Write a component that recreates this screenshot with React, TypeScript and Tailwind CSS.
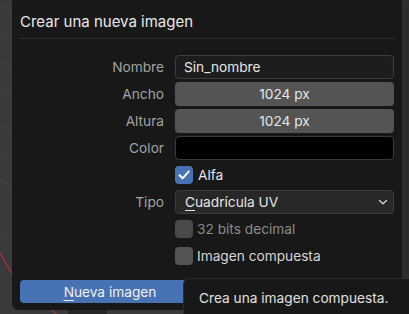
import React from "react";

function Check({ checked, dim }: { checked?: boolean; dim?: boolean }) {
  return (
    <div
      className={
        "w-[18px] h-[18px] rounded-[4px] flex items-center justify-center shrink-0 " +
        (checked ? "bg-[#4772b3]" : dim ? "bg-[#4a4a4a]" : "bg-[#545454]")
      }
    >
      {checked && (
        <svg width="14" height="14" viewBox="0 0 14 14">
          <path d="M2.5 7.2 L5.6 10.3 L11.6 3.6" fill="none" stroke="#ffffff" strokeWidth="2" strokeLinecap="round" strokeLinejoin="round" />
        </svg>
      )}
    </div>
  );
}

function Row({ label, children }: { label?: string; children: React.ReactNode }) {
  return (
    <div className="flex items-center h-[24px]">
      <div className="w-[145px] shrink-0 text-right text-[#a3a3a3]">{label}</div>
      <div className="w-[11px] shrink-0" />
      <div className="w-[219px] h-full flex items-center">{children}</div>
    </div>
  );
}

export default function App() {
  return (
    <div className="relative w-[409px] h-[314px] overflow-hidden bg-[#3a3a3a] font-['Inter','Noto_Sans',sans-serif] text-[13.7px] leading-[16px]">
      <svg className="absolute inset-0" width="409" height="314" viewBox="0 0 409 314">
        <g stroke="#474747" strokeWidth="1">
          <line x1="-5" y1="2" x2="20" y2="16" />
          <line x1="-5" y1="40" x2="20" y2="26" />
          <line x1="-5" y1="58" x2="20" y2="72" />
          <line x1="-5" y1="98" x2="20" y2="84" />
          <line x1="-5" y1="122" x2="20" y2="136" />
          <line x1="-5" y1="160" x2="20" y2="146" />
          <line x1="-5" y1="176" x2="20" y2="192" />
          <line x1="-5" y1="240" x2="20" y2="226" />
        </g>
        <line x1="0" y1="253" x2="20" y2="287" stroke="#a8323f" strokeWidth="1.2" />
        <line x1="50" y1="308" x2="58" y2="316" stroke="#a8323f" strokeWidth="1.2" />
        <rect x="68" y="310" width="39" height="6" fill="#262626" />
      </svg>
      <div className="absolute right-0 top-0 w-[8px] h-full bg-[#2c2c2c]" />

      <div className="absolute left-[12px] top-[-3px] w-[390px] h-[313px] rounded-[6px] bg-[#181818] flex flex-col px-[7px]">
        <div className="pt-[15px] pl-[1px] h-[35px] text-[15px] leading-[20px] text-[#e8e8e8]">Crear una nueva imagen</div>
        <div className="mt-[6px] h-[1px] bg-[#2e2e2e]" />
        <div className="mt-[15.5px] flex flex-col gap-[3px]">
          <Row label="Nombre">
            <div className="w-full h-full rounded-[4px] bg-[#1d1d1d] border border-[#3d3d3d] flex items-center pl-[8px] text-[#e6e6e6]">Sin_nombre</div>
          </Row>
          <Row label="Ancho">
            <div className="w-full h-full rounded-[4px] bg-[#545454] flex items-center justify-center text-[#e6e6e6]">1024 px</div>
          </Row>
          <Row label="Altura">
            <div className="w-full h-full rounded-[4px] bg-[#545454] flex items-center justify-center text-[#e6e6e6]">1024 px</div>
          </Row>
          <Row label="Color">
            <div className="w-full h-full rounded-[4px] bg-[#000000] border border-[#3a3a3a]" />
          </Row>
          <Row>
            <div className="flex items-center gap-[5px] text-[#e6e6e6]">
              <Check checked />
              <span>Alfa</span>
            </div>
          </Row>
          <Row label="Tipo">
            <div className="w-full h-full rounded-[4px] bg-[#282828] border border-[#3d3d3d] flex items-center pl-[9px] pr-[4px] text-[#e6e6e6]">
              <span className="flex-1">
                <span className="underline decoration-1 underline-offset-[3px]">C</span>uadrícula UV
              </span>
              <svg width="10" height="8" viewBox="0 0 10 8" className="mr-[1px]">
                <path d="M1.5 2.5 L5 5.8 L8.5 2.5" fill="none" stroke="#d0d0d0" strokeWidth="1.4" strokeLinecap="round" strokeLinejoin="round" />
              </svg>
            </div>
          </Row>
          <Row>
            <div className="flex items-center gap-[4px] text-[#8c8c8c]">
              <Check dim />
              <span>32 bits decimal</span>
            </div>
          </Row>
          <Row>
            <div className="flex items-center gap-[4px] text-[#d6d6d6]">
              <Check />
              <span>Imagen compuesta</span>
            </div>
          </Row>
        </div>
        <div className="mt-[12.5px] ml-[1px] w-[180px] h-[23px] rounded-[4px] bg-[#4772b3] flex items-center justify-center text-[#f0f0f0]">
          <span>
            <span className="underline decoration-1 underline-offset-[3px]">N</span>ueva imagen
          </span>
        </div>
      </div>

      <div className="absolute left-[183px] top-[278px] w-[240px] h-[50px] rounded-[6px] bg-[#181818] border border-[#2c2c2c] pl-[15px] pt-[11px] text-[#e0e0e0]">
        Crea una imagen compuesta.
      </div>
    </div>
  );
}
